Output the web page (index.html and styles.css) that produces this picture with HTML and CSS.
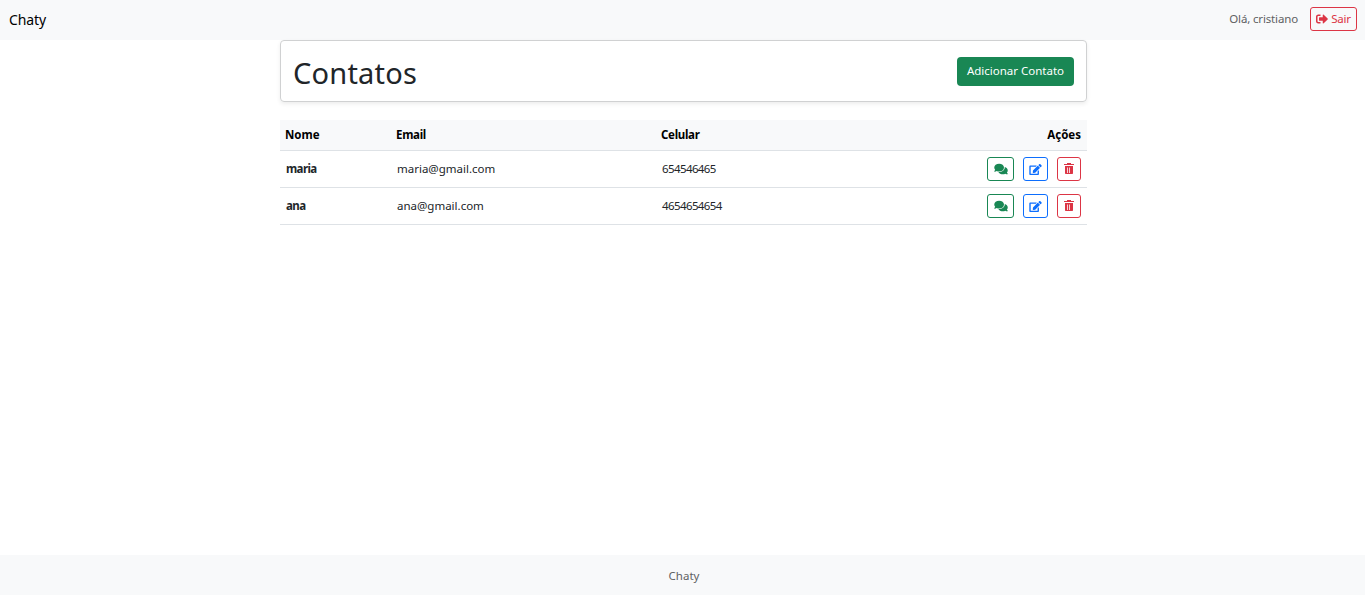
FILE: index.html
```html
<!DOCTYPE html>
<html lang="pt-BR">
<head>
<meta charset="utf-8">
<title>Chaty</title>
<link rel="stylesheet" href="styles.css">
</head>
<body>
<svg class="symbols" aria-hidden="true">
  <symbol id="exit" viewBox="0 0 512 512"><path d="M497 273 329 441c-15 15-41 4.500-41-17v-96H152c-13.300 0-24-10.700-24-24v-96c0-13.300 10.700-24 24-24h136V88c0-21.400 25.900-32 41-17l168 168c9.300 9.400 9.300 24.600 0 34zM192 436v-40c0-6.600-5.400-12-12-12H96c-17.700 0-32-14.300-32-32V160c0-17.700 14.300-32 32-32h84c6.600 0 12-5.400 12-12V76c0-6.600-5.400-12-12-12H96c-53 0-96 43-96 96v192c0 53 43 96 96 96h84c6.600 0 12-5.400 12-12z"/></symbol>
  <symbol id="chat" viewBox="0 0 576 512"><path d="M416 192c0-88.400-93.100-160-208-160S0 103.600 0 192c0 34.300 14.100 65.900 38 92-13.400 30.200-35.500 54.200-35.800 54.500-5 5.300-5.600 12-2.700 18.700S8.700 368 16 368c36.600 0 66.900-12.300 88.700-25C135.700 357.200 170.700 366 208 366c114.900 0 208-71.600 208-174zm122 220c23.900-26 38-57.700 38-92 0-66.900-53.500-124.200-129.300-148.100.9 6.600 1.300 13.300 1.300 20.100 0 105.900-107.700 192-240 192-10.800 0-21.300-.8-31.700-1.900C207.800 439.600 281.800 480 368 480c37.300 0 72.300-8.800 103.300-23 21.800 12.700 52.100 25 88.700 25 7.300 0 13.200-5.400 16-11 2.900-6.700 1.500-13.300-2.200-18.500-.3-.3-22.400-24.200-35.800-40.500z"/></symbol>
  <symbol id="edit" viewBox="0 0 576 512"><path d="m402.600 83.200 90.200 90.200c3.800 3.800 3.800 10 0 13.800L274.400 405.600l-92.800 10.300c-12.400 1.400-22.900-9.100-21.500-21.500l10.300-92.800L388.800 83.200c3.800-3.800 10-3.800 13.800 0zm162-22.900-48.800-48.800c-15.200-15.200-39.900-15.200-55.200 0l-35.400 35.400c-3.800 3.800-3.800 10 0 13.800l90.200 90.200c3.800 3.800 10 3.800 13.800 0l35.400-35.400c15.200-15.300 15.200-40 0-55.200zM384 346.200V448H64V128h229.800c3.200 0 6.200-1.300 8.500-3.500l40-40c7.600-7.600 2.200-20.500-8.500-20.500H48C21.500 64 0 85.500 0 112v352c0 26.500 21.500 48 48 48h352c26.500 0 48-21.500 48-48V306.200c0-10.700-12.900-16-20.500-8.500l-40 40c-2.200 2.300-3.500 5.300-3.500 8.500z"/></symbol>
  <symbol id="trash" viewBox="0 0 10 11"><path fill-rule="evenodd" d="M3 0h4v1h3v1H0V1h3zM1 3h8v7.300a.7.700 0 0 1-.7.700H1.700a.7.700 0 0 1-.7-.7zm2 1.500V10h.8V4.500zm2 0V10h.8V4.500z"/></symbol>
</svg>
<header class="navbar">
  <a class="brand">Chaty</a>
  <div class="session">
    <span class="greeting">Olá, cristiano</span>
    <button class="btn danger logout"><svg class="icon"><use href="#exit"/></svg><span>Sair</span></button>
  </div>
</header>
<main class="container">
  <section class="card">
    <h1 class="title">Contatos</h1>
    <button class="add">Adicionar Contato</button>
  </section>
  <table class="contacts">
    <thead><tr><th class="name">Nome</th><th class="email">Email</th><th class="phone">Celular</th><th class="actions-head">Ações</th></tr></thead>
    <tbody>
      <tr><th class="first">maria</th><td class="mail">maria@gmail.com</td><td class="number">654546465</td>
        <td><div class="actions"><button class="btn success"><svg class="icon wide"><use href="#chat"/></svg></button><button class="btn primary"><svg class="icon edit"><use href="#edit"/></svg></button><button class="btn danger trash"><svg class="icon bin"><use href="#trash"/></svg></button></div></td></tr>
      <tr><th class="first">ana</th><td class="mail">ana@gmail.com</td><td class="number">4654654654</td>
        <td><div class="actions"><button class="btn success"><svg class="icon wide"><use href="#chat"/></svg></button><button class="btn primary"><svg class="icon edit"><use href="#edit"/></svg></button><button class="btn danger trash"><svg class="icon bin"><use href="#trash"/></svg></button></div></td></tr>
    </tbody>
  </table>
</main>
<footer class="footer">Chaty</footer>
</body>
</html>
```
FILE: styles.css
```css
* { box-sizing: border-box; }
body { margin: 0; height: 595px; display: flex; flex-direction: column; font: 11.5px/18px "Noto Sans", sans-serif; color: #212529; background: #fff; }
.symbols { display: none; }
.navbar { height: 40px; padding: 0 8px 2px 9px; display: flex; align-items: center; justify-content: space-between; background: #f8f9fa; }
.brand { padding-top: 2px; font-size: 14px; color: #000; letter-spacing: -.1px; }
.session { display: flex; align-items: center; gap: 12px; }
.greeting { color: #5f6163; letter-spacing: -.15px; }
.btn { height: 24px; padding: 0; display: flex; align-items: center; justify-content: center; border: 1px solid currentColor; border-radius: 3px; background: transparent; font: inherit; }
.success { width: 27px; color: #198754; }
.primary { width: 25px; color: #0d6efd; }
.danger { width: 24px; color: #dc3545; }
.logout { width: 47px; gap: 3px; letter-spacing: -.3px; }
.icon { width: 12px; height: 12px; fill: currentColor; }
.wide { width: 14px; }
.edit { width: 13px; height: 11px; }
.bin { width: 10px; height: 11px; margin-bottom: 1px; }
.container { width: 807px; margin-left: 280px; flex: 1; }
.card { height: 62px; padding: 0 12px; display: flex; align-items: center; justify-content: space-between; border: 1px solid #d0d1d2; border-radius: 4px; box-shadow: 0 2px 4px rgba(0, 0, 0, .075); }
.title { margin: 0; padding-top: 3px; font-size: 29px; font-weight: 450; line-height: 36px; letter-spacing: .2px; }
.add { width: 117px; height: 29px; padding: 0 0 1px; border: 0; border-radius: 4px; background: #198754; color: #fff; font: inherit; }
.contacts { width: 807px; margin-top: 18px; border-collapse: separate; border-spacing: 0; table-layout: fixed; }
.contacts th, .contacts td { padding: 0 6px; text-align: left; border-bottom: 1px solid #dee2e6; }
.contacts thead { background: #f8f9fa; color: #000; }
.contacts thead tr { height: 31px; }
.contacts tbody tr { height: 37px; }
.contacts .name { width: 111px; padding-left: 5px; }
.contacts .email { width: 265px; padding-left: 5px; letter-spacing: -.3px; }
.contacts .phone { width: 200px; padding-left: 5px; letter-spacing: -.3px; }
.contacts .actions-head { text-align: right; }
.contacts .first { letter-spacing: -.6px; }
.number { letter-spacing: -.6px; }
.actions { display: flex; justify-content: flex-end; gap: 9px; }
.footer { height: 40px; padding: 12px 0 0 3px; background: #f8f9fa; color: #5f6163; text-align: center; }
```
